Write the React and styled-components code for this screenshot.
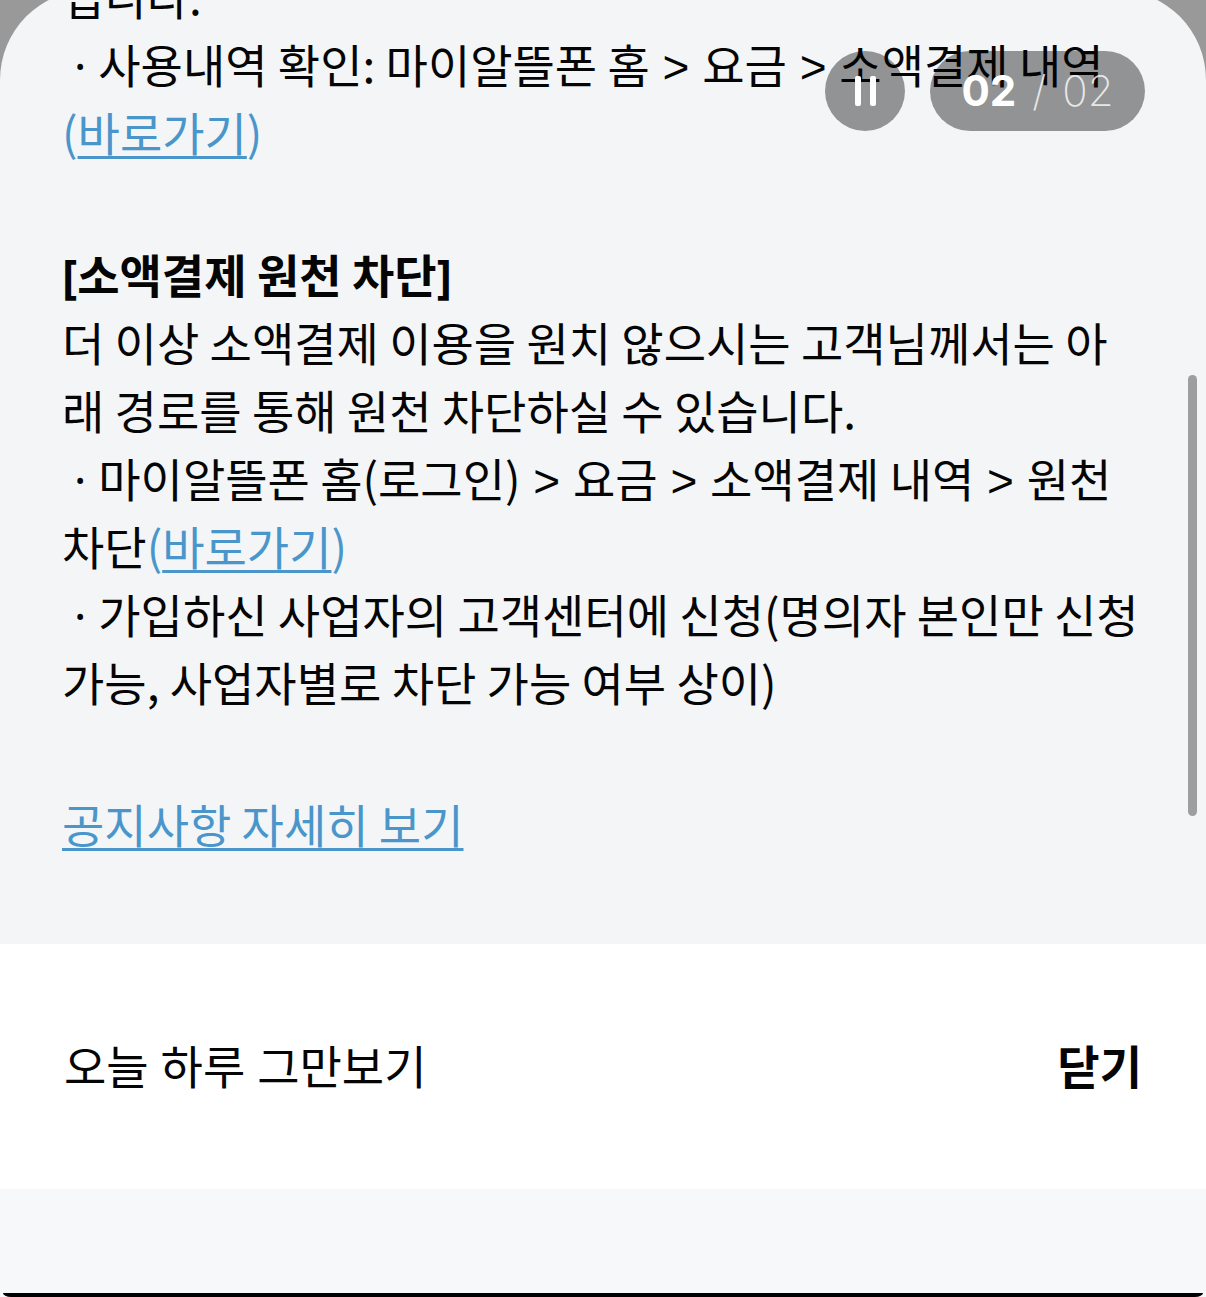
import { useState } from 'react';
import styled, { createGlobalStyle } from 'styled-components';

const colors = {
  text: '#050505',
  link: '#4a96cb',
  sheet: '#f3f5f7',
  footer: '#ffffff',
  bottom: '#f6f8fa',
  dim: '#999999',
  overlay: 'rgba(0, 0, 0, 0.4)',
  thumb: '#9d9e9e',
};
const fonts = {
  body: "'Noto Sans CJK KR', sans-serif",
  mixed: "'Noto Sans', 'Noto Sans CJK KR', sans-serif",
  arrow: "'Liberation Sans', 'Noto Sans CJK KR', sans-serif",
  number: "Inter, 'Noto Sans', sans-serif",
};

const GlobalStyle = createGlobalStyle`
  * {
    box-sizing: border-box;
  }
  body {
    margin: 0;
    color: ${colors.text};
    font-family: ${fonts.body};
    font-size: 46px;
    line-height: 68px;
  }
`;
const Screen = styled.div`
  position: relative;
  display: flex;
  flex-direction: column;
  min-height: 100vh;
  overflow: hidden;
  background: ${colors.dim};
`;
const Sheet = styled.main`
  margin-top: -10px;
  padding: 0 62px 87px;
  border-radius: 90px 90px 0 0;
  background: ${colors.sheet};
  overflow: hidden;
`;
// scrolled part way down, so the first line is cut by the top edge
const Notice = styled.article`
  display: flex;
  flex-direction: column;
  gap: 74px;
  margin-top: -29px;
  word-break: break-all;
`;
const Title = styled.h2`
  margin: 0;
  font-size: inherit;
  font-weight: 700;
`;
const Text = styled.p`
  margin: 0;
`;
// line-height: 1 keeps the second font from making its row taller
const Mark = styled.span`
  font-family: ${fonts.mixed};
  line-height: 1;
`;
const Gt = styled.span`
  font-family: ${fonts.arrow};
  line-height: 1;
`;
const Link = styled.a`
  color: ${colors.link};
  text-decoration: underline;
  text-decoration-thickness: 3px;
  text-decoration-skip-ink: none;
  text-underline-offset: 5px;
`;
const Paren = styled.span`
  color: ${colors.link};
`;
const Controls = styled.div`
  position: absolute;
  top: 51px;
  right: 61px;
  display: flex;
  gap: 25px;
`;
const PlayButton = styled.button`
  display: flex;
  justify-content: center;
  align-items: center;
  width: 80px;
  height: 80px;
  padding: 0;
  border: 0;
  border-radius: 50%;
  background: ${colors.overlay};
  cursor: pointer;
`;
const Pager = styled.div`
  display: flex;
  justify-content: center;
  align-items: center;
  gap: 16px;
  width: 215px;
  height: 80px;
  border-radius: 40px;
  background: ${colors.overlay};
  color: rgba(255, 255, 255, 0.8);
  font-family: ${fonts.number};
  font-size: 42px;
  font-weight: 200;
`;
const Current = styled.strong`
  color: #fff;
  font-weight: 700;
`;
const ScrollThumb = styled.div`
  position: absolute;
  top: 375px;
  right: 9px;
  width: 9px;
  height: 441px;
  border-radius: 5px;
  background: ${colors.thumb};
`;
const Footer = styled.footer`
  display: flex;
  justify-content: space-between;
  align-items: center;
  padding: 88px 64px 89px;
  background: ${colors.footer};
`;
const FooterButton = styled.button`
  padding: 0;
  border: 0;
  background: none;
  color: inherit;
  font: inherit;
  font-family: ${fonts.mixed};
  font-weight: ${({ $bold }) => ($bold ? 700 : 400)};
  cursor: pointer;
`;
const BottomArea = styled.div`
  display: flex;
  flex: 1;
  flex-direction: column;
  justify-content: flex-end;
  background: ${colors.bottom};
`;
const BottomEdge = styled.div`
  height: 4px;
  margin: 0 3px;
  border-radius: 0 0 8px 8px / 0 0 4px 4px;
  background: #000;
`;

const Bullet = () => <Mark>&nbsp;· </Mark>;
const Arrow = () => <Gt> &gt; </Gt>;
const Shortcut = () => (
  <>
    <Paren>(</Paren>
    <Link href="#shortcut">바로가기</Link>
    <Paren>)</Paren>
  </>
);

export default function App() {
  const [playing, setPlaying] = useState(true);

  return (
    <Screen>
      <GlobalStyle />
      <Sheet>
        <Notice>
          <div>
            <Text>입니다.</Text>
            <Text>
              <Bullet />
              사용내역 확인: 마이알뜰폰 홈
              <Arrow />
              요금
              <Arrow />
              소액결제 내역
              <Shortcut />
            </Text>
          </div>
          <div>
            <Title>
              <Mark>[</Mark>소액결제 원천 차단<Mark>]</Mark>
            </Title>
            <Text>
              더 이상 소액결제 이용을 원치 않으시는 고객님께서는 아래 경로를 통해
              원천 차단하실 수 있습니다.
            </Text>
            <Text>
              <Bullet />
              마이알뜰폰 홈(로그인)
              <Arrow />
              요금
              <Arrow />
              소액결제 내역
              <Arrow />
              원천 차단
              <Shortcut />
            </Text>
            <Text>
              <Bullet />
              가입하신 사업자의 고객센터에 신청(명의자 본인만 신청 가능,
              사업자별로 차단 가능 여부 상이)
            </Text>
          </div>
          <Text>
            <Link href="#notice">공지사항 자세히 보기</Link>
          </Text>
        </Notice>
      </Sheet>
      <Footer>
        <FooterButton type="button">오늘 하루 그만보기</FooterButton>
        <FooterButton type="button" $bold>
          닫기
        </FooterButton>
      </Footer>
      <BottomArea>
        <BottomEdge />
      </BottomArea>
      <Controls>
        <PlayButton
          type="button"
          aria-label={playing ? '일시정지' : '재생'}
          onClick={() => setPlaying(!playing)}
        >
          <svg width="22" height="30" viewBox="0 0 22 30" fill="#fff">
            {playing ? (
              <>
                <rect x="1" width="6" height="30" rx="2" />
                <rect x="16" width="6" height="30" rx="2" />
              </>
            ) : (
              <path d="M0 0 L22 15 L0 30 Z" />
            )}
          </svg>
        </PlayButton>
        <Pager>
          <Current>02</Current>
          <span>/</span>
          <span>02</span>
        </Pager>
      </Controls>
      <ScrollThumb />
    </Screen>
  );
}
